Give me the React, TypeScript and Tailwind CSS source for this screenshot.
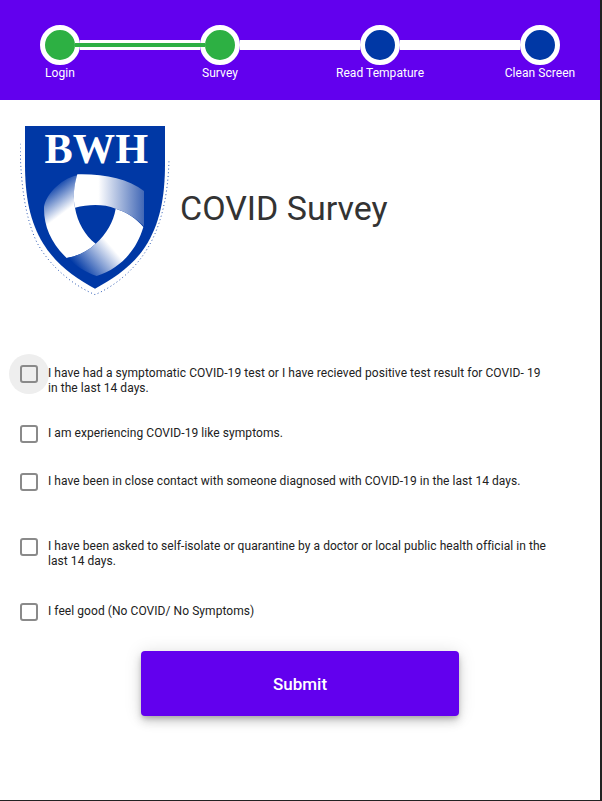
const steps = [
  { label: 'Login', done: true },
  { label: 'Survey', done: true },
  { label: 'Read Tempature', done: false },
  { label: 'Clean Screen', done: false },
];

const questions = [
  { text: 'I have had a symptomatic COVID-19 test or I have recieved positive test result for COVID- 19 in the last 14 days.', gap: 'mt-0', hover: true },
  { text: 'I am experiencing COVID-19 like symptoms.', gap: 'mt-5', hover: false },
  { text: 'I have been in close contact with someone diagnosed with COVID-19 in the last 14 days.', gap: 'mt-2', hover: false },
  { text: 'I have been asked to self-isolate or quarantine by a doctor or local public health official in the last 14 days.', gap: 'mt-[25px]', hover: false },
  { text: 'I feel good (No COVID/ No Symptoms)', gap: 'mt-[25px]', hover: false },
];

function Logo() {
  return (
    <svg width="150" height="170" viewBox="60 47 450 510" className="shrink-0">
      <defs>
        <linearGradient id="bandTop" gradientUnits="userSpaceOnUse" x1="295" y1="0" x2="435" y2="0">
          <stop offset="0" stopColor="#ffffff" />
          <stop offset="1" stopColor="#3d64b4" />
        </linearGradient>
        <linearGradient id="bandRight" gradientUnits="userSpaceOnUse" x1="340" y1="370" x2="227" y2="468">
          <stop offset="0.2" stopColor="#ffffff" />
          <stop offset="1" stopColor="#0038a5" />
        </linearGradient>
        <linearGradient id="bandLeft" gradientUnits="userSpaceOnUse" x1="210" y1="340" x2="135" y2="240">
          <stop offset="0.3" stopColor="#ffffff" />
          <stop offset="1" stopColor="#0038a5" />
        </linearGradient>
      </defs>
      <path
        d="M60 100 C62 220 75 320 110 395 C150 470 220 525 285 553 C350 525 425 465 465 370 C495 300 505 220 507 150"
        fill="none"
        stroke="#0038a5"
        strokeWidth="2.5"
        strokeDasharray="3 8"
      />
      <path
        d="M75 47 H495 V160 C495 260 480 340 435 410 C395 470 340 505 285 535 C230 505 170 465 130 400 C90 335 75 260 75 160 Z"
        fill="#0038a5"
      />
      <text
        x="289"
        y="158"
        textAnchor="middle"
        fill="#ffffff"
        fontFamily="'Liberation Serif', serif"
        fontWeight="700"
        fontSize="127"
      >
        BWH
      </text>
      <path d="M132 295 C132 260 180 205 232 195 C222 225 218 260 225 292 C232 335 255 375 287 400 C260 425 230 438 200 443 C155 400 132 350 132 295 Z" fill="url(#bandLeft)" />
      <path d="M347 295 C380 305 410 325 430 350 C410 420 360 475 290 497 C255 485 225 465 200 443 C230 438 260 425 287 400 C320 370 340 335 347 295 Z" fill="url(#bandRight)" />
      <path d="M232 192 C310 190 385 205 432 242 V348 C410 325 380 305 347 295 C310 280 265 282 225 292 C218 260 222 225 232 192 Z" fill="url(#bandTop)" />
    </svg>
  );
}

export default function App() {
  return (
    <div className="w-[602px] h-[801px] bg-[#222222] font-['Roboto',sans-serif]">
      <div className="w-[600px] h-[800px] bg-white overflow-hidden">
        {/* Stepper */}
        <div className="h-[100px] bg-[#6200ee] px-10 pt-[25px]">
          <div className="flex items-center">
            {steps.map((step, i) => (
              <div key={step.label} className="flex items-center">
                {i > 0 && (
                  <div className="w-[120px] h-[10px] bg-white flex items-center">
                    {step.done && <div className="relative z-10 w-[130px] shrink-0 -mx-[5px] h-1 bg-[#2db043]" />}
                  </div>
                )}
                <div
                  className={`w-10 h-10 rounded-full border-[5px] border-white ${
                    step.done ? 'bg-[#2db043]' : 'bg-[#0038a5]'
                  }`}
                />
              </div>
            ))}
          </div>
          <div className="flex justify-between pt-px">
            {steps.map(step => (
              <div key={step.label} className="w-10 flex justify-center">
                <span className="whitespace-nowrap text-xs leading-[15px] tracking-[0.05px] text-white">{step.label}</span>
              </div>
            ))}
          </div>
        </div>

        {/* Title */}
        <div className="flex items-center gap-[10px] pl-5 pt-[26px]">
          <Logo />
          <h1 className="text-[34px] leading-10 text-[#333333] -mt-1.5">COVID Survey</h1>
        </div>

        {/* Questions */}
        <div className="mt-[58px] pl-[9px]">
          {questions.map(q => (
            <label key={q.text} className={`flex items-start h-10 w-[542px] ${q.gap}`}>
              <span
                className={`w-10 h-10 shrink-0 rounded-full flex items-center justify-center ${
                  q.hover ? 'bg-[#eeeeee]' : ''
                }`}
              >
                <span className="w-[18px] h-[18px] rounded-[3px] border-2 border-[#8a8a8a]" />
              </span>
              <span className="-ml-px pt-3 text-xs leading-[15px] tracking-[0.06px] text-[#212121]">{q.text}</span>
            </label>
          ))}
        </div>

        {/* Submit */}
        <div className="flex justify-center mt-[19px]">
          <button className="w-[318px] h-[65px] pt-0.5 rounded bg-[#6200ee] text-white text-[17px] font-medium shadow-[0_3px_5px_-1px_rgba(0,0,0,0.2),0_6px_10px_0_rgba(0,0,0,0.14),0_1px_18px_0_rgba(0,0,0,0.12)]">
            Submit
          </button>
        </div>
      </div>
    </div>
  );
}
